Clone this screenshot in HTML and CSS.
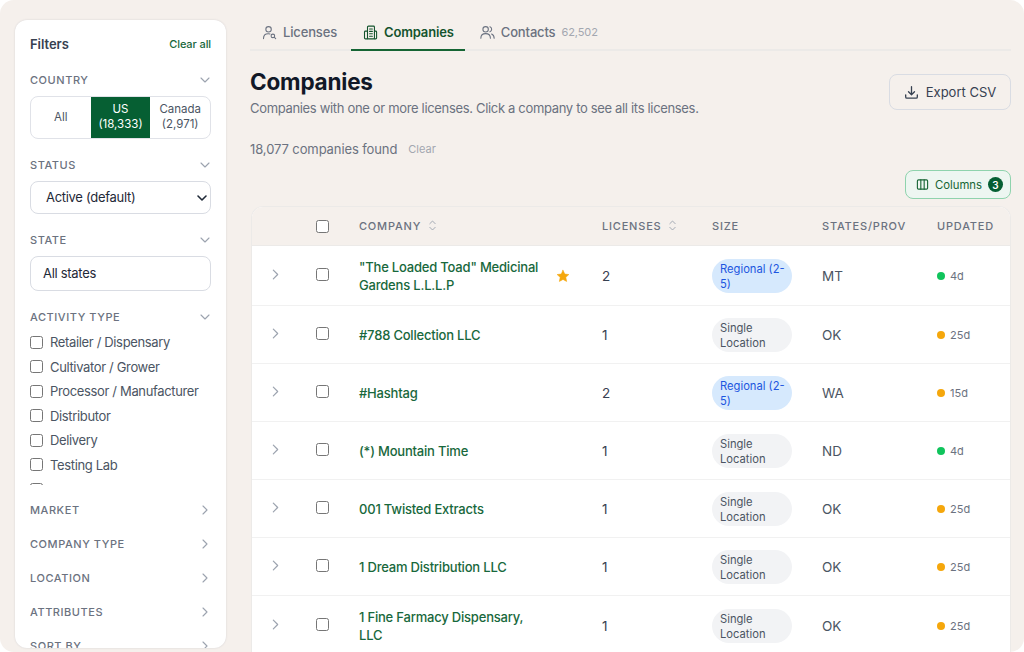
FILE: index.html
```html
<!DOCTYPE html>
<html lang="en">
<head>
<meta charset="utf-8">
<title>Companies</title>
<link rel="stylesheet" href="styles.css">
</head>
<body>
<div class="page">
  <aside class="sidebar">
    <div class="side-head"><h2>Filters</h2><a class="clear-all">Clear all</a></div>

    <div class="sec-head first"><span>COUNTRY</span><svg class="chev" viewBox="0 0 12 12"><path d="M2 4l4 4 4-4"/></svg></div>
    <div class="segment">
      <div class="seg">All</div>
      <div class="seg active">US<br>(18,333)</div>
      <div class="seg">Canada<br>(2,971)</div>
    </div>

    <div class="sec-head"><span>STATUS</span><svg class="chev" viewBox="0 0 12 12"><path d="M2 4l4 4 4-4"/></svg></div>
    <div class="select">Active (default)<svg class="sel-chev" viewBox="0 0 12 12"><path d="M2 4l4 4 4-4"/></svg></div>

    <div class="sec-head"><span>STATE</span><svg class="chev" viewBox="0 0 12 12"><path d="M2 4l4 4 4-4"/></svg></div>
    <div class="input">All states</div>

    <div class="sec-head tight"><span>ACTIVITY TYPE</span><svg class="chev" viewBox="0 0 12 12"><path d="M2 4l4 4 4-4"/></svg></div>
    <div class="checks">
      <label class="check"><i class="box"></i>Retailer / Dispensary</label>
      <label class="check"><i class="box"></i>Cultivator / Grower</label>
      <label class="check"><i class="box"></i>Processor / Manufacturer</label>
      <label class="check"><i class="box"></i>Distributor</label>
      <label class="check"><i class="box"></i>Delivery</label>
      <label class="check"><i class="box"></i>Testing Lab</label>
      <label class="check"><i class="box"></i></label>
    </div>

    <div class="closed"><span>MARKET</span><svg class="chev" viewBox="0 0 12 12"><path d="M4 2l4 4-4 4"/></svg></div>
    <div class="closed"><span>COMPANY TYPE</span><svg class="chev" viewBox="0 0 12 12"><path d="M4 2l4 4-4 4"/></svg></div>
    <div class="closed"><span>LOCATION</span><svg class="chev" viewBox="0 0 12 12"><path d="M4 2l4 4-4 4"/></svg></div>
    <div class="closed"><span>ATTRIBUTES</span><svg class="chev" viewBox="0 0 12 12"><path d="M4 2l4 4-4 4"/></svg></div>
    <div class="closed"><span>SORT BY</span><svg class="chev" viewBox="0 0 12 12"><path d="M4 2l4 4-4 4"/></svg></div>
  </aside>

  <main class="main">
    <nav class="tabs">
      <a class="tab">
        <svg class="tab-ico" viewBox="0 0 16 16"><circle cx="7" cy="4.6" r="2.9"/><path d="M1.6 14.5c0-3.2 2.2-5.2 5-5.2.7 0 1.3.1 1.9.3"/><circle cx="11.6" cy="11.6" r="1.9"/><path d="M13 13l1.6 1.6"/></svg>
        Licenses</a>
      <a class="tab on">
        <svg class="tab-ico" viewBox="0 0 16 16"><rect x="4.8" y="1.2" width="7.4" height="13.6" rx="1"/><path d="M4.8 6.5H2.6a1 1 0 0 0-1 1v6.3a1 1 0 0 0 1 1h2.2M12.2 6.5h1.300a1 1 0 0 1 1 1v6.300a1 1 0 0 1-1 1h-1.300M7 4.200h3M7 6.800h3M7 9.400h3M7 12h3"/></svg>
        Companies</a>
      <a class="tab">
        <svg class="tab-ico" viewBox="0 0 16 16"><circle cx="6" cy="4.6" r="2.9"/><path d="M.9 14.2c0-3 2.2-5 5.1-5s5.1 2 5.1 5M10.6 1.9a2.9 2.9 0 0 1 0 5.4M12.4 9.6c1.700.7 2.700 2.400 2.700 4.600"/></svg>
        Contacts<span class="count">62,502</span></a>
    </nav>

    <div class="title-row">
      <div>
        <h1>Companies</h1>
        <p class="sub">Companies with one or more licenses. Click a company to see all its licenses.</p>
      </div>
      <button class="export">
        <svg viewBox="0 0 16 16"><path d="M8 1.8v8.4M4.8 7.2L8 10.4l3.2-3.200M1.800 10.500v2.200a1.300 1.300 0 0 0 1.300 1.300h9.800a1.300 1.300 0 0 0 1.300-1.300v-2.200"/></svg>
        Export CSV</button>
    </div>

    <div class="found"><span>18,077 companies found</span><a>Clear</a></div>

    <div class="col-row">
      <button class="columns">
        <svg viewBox="0 0 14 14"><rect x="1.5" y="2" width="11" height="10" rx="1.2"/><path d="M5.2 2v10M8.8 2v10"/></svg>
        Columns<b>3</b></button>
    </div>

    <div class="table-wrap">
      <table>
        <colgroup><col class="c1"><col class="c2"><col class="c3"><col class="c4"><col class="c5"><col class="c6"><col class="c7"></colgroup>
        <thead>
          <tr>
            <th></th>
            <th><i class="box"></i></th>
            <th><span class="th-in">COMPANY<svg class="sort" viewBox="0 0 10 14"><path d="M2 5l3-3 3 3M2 9l3 3 3-3"/></svg></span></th>
            <th><span class="th-in">LICENSES<svg class="sort" viewBox="0 0 10 14"><path d="M2 5l3-3 3 3M2 9l3 3 3-3"/></svg></span></th>
            <th>SIZE</th>
            <th>STATES/PROV</th>
            <th>UPDATED</th>
          </tr>
        </thead>
        <tbody>
          <tr>
            <td><svg class="row-chev" viewBox="0 0 12 12"><path d="M4 2l4 4-4 4"/></svg></td>
            <td><i class="box"></i></td>
            <td><div class="name-cell"><a class="name">"The Loaded Toad" Medicinal Gardens L.L.L.P</a><svg class="star" viewBox="0 0 24 24"><path d="M12 2.200l3 6.500 7 .8-5.200 4.800 1.400 7-6.200-3.500-6.200 3.500 1.400-7L1.900 9.500l7-.8z"/></svg></div></td>
            <td class="num">2</td>
            <td><span class="pill blue">Regional (2-5)</span></td>
            <td class="st">MT</td>
            <td><span class="upd"><i class="dot green"></i>4d</span></td>
          </tr>
          <tr>
            <td><svg class="row-chev" viewBox="0 0 12 12"><path d="M4 2l4 4-4 4"/></svg></td>
            <td><i class="box"></i></td>
            <td><a class="name">#788 Collection LLC</a></td>
            <td class="num">1</td>
            <td><span class="pill">Single Location</span></td>
            <td class="st">OK</td>
            <td><span class="upd"><i class="dot amber"></i>25d</span></td>
          </tr>
          <tr>
            <td><svg class="row-chev" viewBox="0 0 12 12"><path d="M4 2l4 4-4 4"/></svg></td>
            <td><i class="box"></i></td>
            <td><a class="name">#Hashtag</a></td>
            <td class="num">2</td>
            <td><span class="pill blue">Regional (2-5)</span></td>
            <td class="st">WA</td>
            <td><span class="upd"><i class="dot amber"></i>15d</span></td>
          </tr>
          <tr>
            <td><svg class="row-chev" viewBox="0 0 12 12"><path d="M4 2l4 4-4 4"/></svg></td>
            <td><i class="box"></i></td>
            <td><a class="name">(*) Mountain Time</a></td>
            <td class="num">1</td>
            <td><span class="pill">Single Location</span></td>
            <td class="st">ND</td>
            <td><span class="upd"><i class="dot green"></i>4d</span></td>
          </tr>
          <tr>
            <td><svg class="row-chev" viewBox="0 0 12 12"><path d="M4 2l4 4-4 4"/></svg></td>
            <td><i class="box"></i></td>
            <td><a class="name">001 Twisted Extracts</a></td>
            <td class="num">1</td>
            <td><span class="pill">Single Location</span></td>
            <td class="st">OK</td>
            <td><span class="upd"><i class="dot amber"></i>25d</span></td>
          </tr>
          <tr>
            <td><svg class="row-chev" viewBox="0 0 12 12"><path d="M4 2l4 4-4 4"/></svg></td>
            <td><i class="box"></i></td>
            <td><a class="name">1 Dream Distribution LLC</a></td>
            <td class="num">1</td>
            <td><span class="pill">Single Location</span></td>
            <td class="st">OK</td>
            <td><span class="upd"><i class="dot amber"></i>25d</span></td>
          </tr>
          <tr>
            <td><svg class="row-chev" viewBox="0 0 12 12"><path d="M4 2l4 4-4 4"/></svg></td>
            <td><i class="box"></i></td>
            <td><a class="name">1 Fine Farmacy Dispensary, LLC</a></td>
            <td class="num">1</td>
            <td><span class="pill">Single Location</span></td>
            <td class="st">OK</td>
            <td><span class="upd"><i class="dot amber"></i>25d</span></td>
          </tr>
        </tbody>
      </table>
    </div>
  </main>
</div>
</body>
</html>
```

FILE: styles.css
```css
* { box-sizing: border-box; }
html, body { margin: 0; height: 100%; background: #fff; overflow: hidden; }
body { font-family: Inter, "Liberation Sans", sans-serif; color: #111827; }
svg { fill: none; stroke: currentColor; stroke-linecap: round; stroke-linejoin: round; }
.page { width: 1024px; height: 652px; background: #f5f0ec; border-radius: 14px; overflow: hidden; display: flex; padding: 20px 13px 0 15px; gap: 24px; }

.sidebar { width: 211px; height: 628px; flex: none; background: #fff; border-radius: 12px; padding: 0 15px; overflow: hidden; box-shadow: 0 0 2px rgba(60,70,100,.18); }
.side-head { display: flex; justify-content: space-between; align-items: center; height: 48px; }
.side-head h2 { margin: 0; font-size: 13px; font-weight: 600; color: #374151; letter-spacing: -.05px; }
.clear-all { font-size: 11px; font-weight: 500; color: #18683c; letter-spacing: -.1px; }
.sec-head { display: flex; justify-content: space-between; align-items: center; height: 16px; margin: 18px 0 8px; font-size: 11px; font-weight: 500; letter-spacing: .55px; color: #6b7280; }
.sec-head.first { margin-top: 4px; }
.sec-head.tight { margin: 18px 0 5px; }
.chev { width: 12px; height: 12px; color: #9ca3af; stroke-width: 1.1; }
.segment { display: flex; height: 43px; border: 1px solid #e0e2e8; border-radius: 8px; overflow: hidden; }
.seg { flex: 1; display: flex; align-items: center; justify-content: center; padding-bottom: 1px; text-align: center; font-size: 11.5px; line-height: 15px; color: #4b5563; }
.seg.active { background: #065f33; color: #fff; }
.select { position: relative; height: 33px; padding: 0 15px 1px; display: flex; align-items: center; border: 1px solid #d9dce3; border-radius: 8px; font-size: 13px; letter-spacing: -.3px; color: #1f2937; }
.sel-chev { position: absolute; right: 2px; top: 10px; width: 12px; height: 12px; stroke-width: 1.6; color: #1f2937; }
.input { height: 35px; padding: 0 12px 1px; display: flex; align-items: center; border: 1px solid #d9dce3; border-radius: 8px; font-size: 13px; letter-spacing: -.3px; color: #1f2937; }
.checks { height: 155px; margin-bottom: 8px; overflow: hidden; }
.check { display: flex; align-items: center; gap: 7px; height: 24.5px; font-size: 13px; letter-spacing: -.35px; color: #4b5563; }
.box { display: inline-block; flex: none; width: 13px; height: 13px; background: #fff; border: 1.3px solid #767676; border-radius: 2.5px; vertical-align: middle; }
.closed { display: flex; justify-content: space-between; align-items: center; height: 34px; font-size: 11px; font-weight: 500; letter-spacing: .55px; color: #6b7280; }

.main { flex: 1; min-width: 0; }
.tabs { display: flex; height: 32px; margin-top: -1px; border-bottom: 2px solid #eceae8; }
.tab { display: flex; align-items: center; gap: 6px; height: 32px; padding: 0 11px 4px 12px; border-bottom: 2px solid transparent; font-size: 13px; font-weight: 500; letter-spacing: -.15px; color: #6b7280; margin-right: 3px; flex: none; }
.tab.on { color: #14532d; font-weight: 600; border-bottom-color: #166534; }
.tab-ico { width: 15px; height: 15px; stroke-width: 1.15; }
.count { font-size: 11px; font-weight: 400; color: #a3a7b0; letter-spacing: -.1px; }
.title-row { display: flex; justify-content: space-between; align-items: flex-start; margin-top: 16px; }
h1 { margin: 0; font-size: 22.5px; line-height: 30px; font-weight: 700; color: #111827; letter-spacing: -.2px; }
.sub { margin: 2px 0 0; font-size: 13px; line-height: 18px; letter-spacing: -.33px; color: #6b7280; }
.export { display: flex; align-items: center; gap: 7px; width: 122px; height: 36px; margin-top: 7px; justify-content: center; background: transparent; border: 1px solid #d9dce3; border-radius: 8px; font: 400 13px Inter, sans-serif; color: #374151; }
.export svg { width: 15px; height: 15px; stroke-width: 1.4; }
.found { display: flex; align-items: center; gap: 11px; height: 18px; margin-top: 23px; font-size: 13px; letter-spacing: -.1px; color: #6b7280; }
.found a { font-size: 11px; letter-spacing: 0; color: #a3a7b0; }
.col-row { display: flex; justify-content: flex-end; margin-top: 12px; }
.columns { display: flex; align-items: center; gap: 6px; height: 29px; width: 106px; padding: 0 0 0 10px; background: #edf6f1; border: 1px solid #8fd3ad; border-radius: 8px; font: 400 11.3px Inter, sans-serif; color: #166534; }
.columns svg { width: 13px; height: 13px; stroke-width: 1.2; }
.columns b { display: flex; align-items: center; justify-content: center; width: 15px; height: 15px; border-radius: 50%; background: #065f33; color: #fff; font-size: 10px; font-weight: 600; }

.table-wrap { margin: 7px 0 0 1px; border: 1px solid #eceae8; border-bottom: 0; border-radius: 12px 12px 0 0; overflow: hidden; background: #fff; }
table { width: 100%; border-collapse: collapse; table-layout: fixed; }
.c1 { width: 46px; } .c2 { width: 48px; } .c3 { width: 243px; } .c4 { width: 110px; } .c5 { width: 110px; } .c6 { width: 115px; } .c7 { width: auto; }
th { height: 38px; background: #f5f0ec; padding: 0 0 0 13px; text-align: left; font-size: 11px; font-weight: 500; letter-spacing: .8px; color: #6b7280; border-bottom: 1px solid #eceae8; }
td { padding: 12px 0 11px 13px; font-size: 13px; line-height: 18px; border-bottom: 1px solid #f1f1f1; vertical-align: middle; }
th:nth-child(-n+2), td:nth-child(-n+2) { padding-left: 0; text-align: center; }
td:nth-child(2) .box { position: relative; top: -2px; }
.th-in { display: inline-flex; align-items: center; gap: 7px; }
.sort { width: 9px; height: 13px; stroke-width: 1; color: #9ca3af; }
.row-chev { display: block; margin: -3px auto 0; width: 13px; height: 13px; color: #9ca3af; stroke-width: 1.1; }
.name { display: block; max-width: 185px; color: #18683c; font-weight: 500; letter-spacing: -.2px; }
.name-cell { display: flex; align-items: center; justify-content: space-between; padding-right: 19px; gap: 10px; }
.star { flex: none; width: 14px; height: 14px; fill: #f5a70c; stroke: #f5a70c; }
.num { font-size: 13.5px; color: #374151; font-weight: 400; }
.st { font-size: 13.5px; color: #4b5563; }
.pill { display: block; width: 80px; min-height: 34px; padding: 3px 5px 0 8px; border-radius: 17px; background: #f2f3f5; font-size: 11.2px; line-height: 15px; color: #4b5563; }
.pill.blue { background: #d6e9fd; color: #1d56e0; }
.upd { display: flex; align-items: center; gap: 5px; font-size: 11px; color: #6b7280; }
.dot { width: 8px; height: 8px; border-radius: 50%; }
.green { background: #10c45c; }
.amber { background: #f5a70c; }
```
